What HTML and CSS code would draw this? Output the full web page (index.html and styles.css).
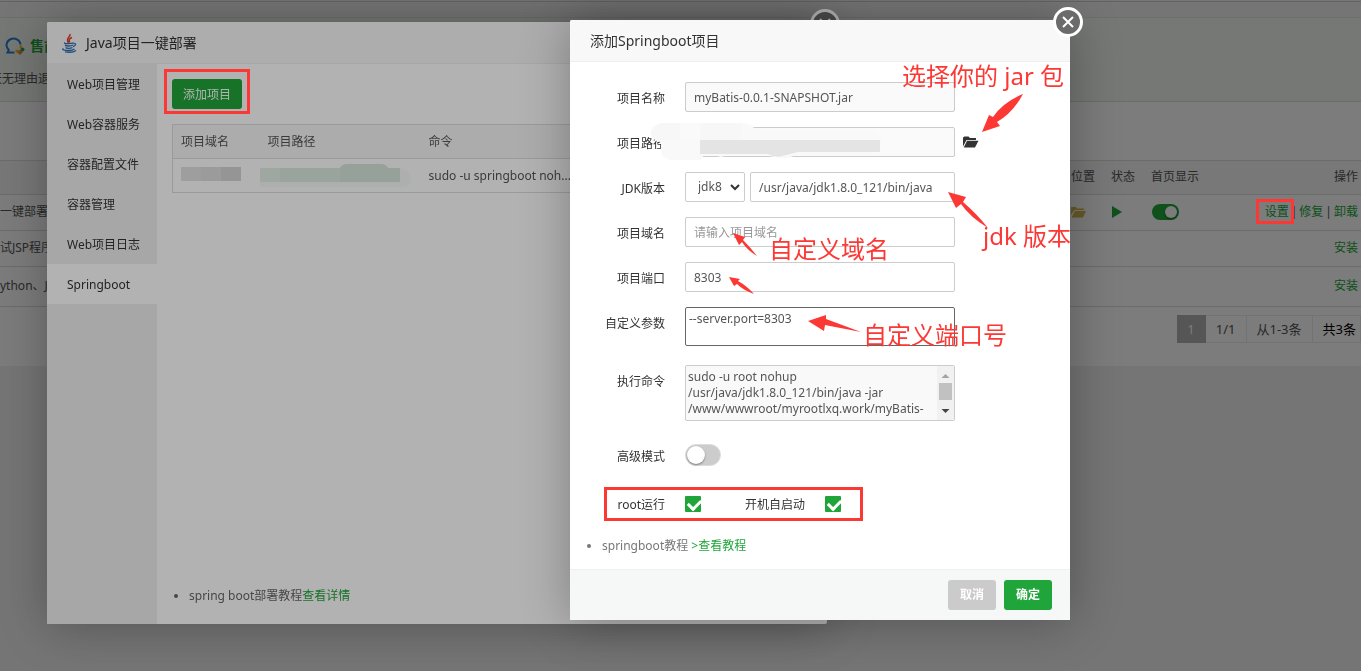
FILE: index.html
```html
<!DOCTYPE html>
<html lang="zh-CN">
<head>
<meta charset="utf-8">
<title>Java项目一键部署</title>
<link rel="stylesheet" href="styles.css">
</head>
<body>
<div class="page">
  <div class="crumb"></div>
  <section class="promo">
    <div class="promo-title">
      <svg width="20" height="18" viewBox="0 0 20 18" fill="none"><path d="M15.500 7.500A7 6.600 0 1 0 3.800 13L2.500 15.500h7" stroke="#2a80d2" stroke-width="2"/><path d="M15 7l2.500 3-3 2z" fill="#e8b92c"/><path d="M10 13.500l6-.5 2 2-3 3z" fill="#e8863c"/><circle cx="17.500" cy="12.500" r="2" fill="#2ca54a"/><circle cx="12" cy="14" r="1.500" fill="#e8b92c"/></svg>
      <strong>售前客服</strong>
    </div>
    <p class="promo-note">天无理由退款</p>
  </section>
  <main class="panel">
    <div class="filters"></div>
    <table class="soft">
      <colgroup><col><col class="w40"><col class="w40"><col class="w110"><col class="w100"></colgroup>
      <thead><tr><th></th><th>位置</th><th>状态</th><th>首页显示</th><th class="end">操作</th></tr></thead>
      <tbody>
        <tr>
          <td>一键部署</td>
          <td><svg class="ico" width="15" height="12" viewBox="0 0 15 12"><path d="M0 1h5l1 1.500h7V4H3.500L0 9z" fill="#d4b94e"/><path d="M4 5h11l-3 6.500H0.500z" fill="#d4b94e"/></svg></td>
          <td><svg class="ico play" width="10" height="12" viewBox="0 0 10 12"><path d="M0 0l10 6-10 6z" fill="#20a53a"/></svg></td>
          <td><input class="switch small" type="checkbox" checked aria-label="首页显示"></td>
          <td class="end"><a href="#">设置</a><span class="sep">|</span><a href="#">修复</a><span class="sep">|</span><a href="#">卸载</a></td>
        </tr>
        <tr><td>试JSP程序</td><td></td><td></td><td></td><td class="end"><a href="#">安装</a></td></tr>
        <tr class="tall"><td>ython、Java</td><td></td><td></td><td></td><td class="end"><a href="#">安装</a></td></tr>
      </tbody>
    </table>
    <nav class="pager"><span class="cur">1</span><span>1/1</span><span>从1-3条</span><span class="total">共3条</span></nav>
  </main>
</div>

<div class="shade"></div>

<section class="dialog deploy" aria-label="Java项目一键部署">
  <button class="close" aria-label="关闭"><svg width="12" height="12" viewBox="0 0 12 12"><path d="M1 1l10 10M11 1L1 11" stroke="#fff" stroke-width="2"/></svg></button>
  <header class="dialog-head">
    <svg class="java" width="16" height="20" viewBox="0 0 16 20" fill="none"><path d="M9 1C10 4 4 5 7.500 10M11 4.500C7 6 8.500 7.500 8.500 9.500" stroke="#e2382c" stroke-width="1.500"/><path d="M4 9.500c-3 1.500 7 1.500 8.500.300M4 12c1 1.300 6 1.300 8 0M4.500 14.500c1 1.200 5 1.200 7 0M12.500 10.500c3.500-.500 2 2.500-.500 3M2.500 15.500c-4 2 8 3 11 .500M4 18.800c4 .700 9 .200 11-1.300" stroke="#2f6fb5" stroke-width="1.300"/></svg>
    <h2>Java项目一键部署</h2>
  </header>
  <div class="deploy-body">
    <nav class="side">
      <a href="#">Web项目管理</a><a href="#">Web容器服务</a><a href="#">容器配置文件</a><a href="#">容器管理</a><a href="#">Web项目日志</a><a href="#" class="on">Springboot</a>
    </nav>
    <div class="deploy-main">
      <button class="btn add">添加项目</button>
      <table class="projects">
        <colgroup><col class="c-name"><col class="c-path"><col></colgroup>
        <thead><tr><th>项目域名</th><th>项目路径</th><th>命令</th></tr></thead>
        <tbody><tr>
          <td><svg class="mask" width="60" height="18" viewBox="0 0 60 18"><path fill="#e2e2e2" d="M0 0h20v14H0z"/><path fill="#dedede" d="M20 0h20v14H20z"/><path fill="#d6d6d6" d="M40 0h20v14H40z"/></svg></td>
          <td><svg class="mask" width="152" height="26" viewBox="0 0 152 26"><path fill="#f8fbf9" d="M0 5h140q11 2 11 14-3 5-10 5H0z"/><path fill="#e4efe7" d="M0 5h20v14H0z"/><path fill="#dcebe0" d="M20 5h120v14H20z"/><path fill="#d7e7db" d="M80 5q2-4 7-4h34q5 0 7 4h12v14H80z"/></svg></td>
          <td>sudo -u springboot noh...</td>
        </tr></tbody>
      </table>
      <ul class="tips"><li>spring boot部署教程<a href="#">查看详情</a></li></ul>
    </div>
  </div>
</section>

<div class="shade"></div>

<form class="dialog create" aria-label="添加Springboot项目">
  <button type="button" class="close" aria-label="关闭"><svg width="12" height="12" viewBox="0 0 12 12"><path d="M1 1l10 10M11 1L1 11" stroke="#fff" stroke-width="2"/></svg></button>
  <header class="dialog-head"><h2>添加Springboot项目</h2></header>
  <div class="fields">
    <div class="field"><label for="name">项目名称</label><input class="text locked" id="name" value="myBatis-0.0.1-SNAPSHOT.jar" readonly></div>
    <div class="field"><label for="path">项目路径</label><input class="text locked" id="path" readonly>
      <button type="button" class="browse" aria-label="选择文件"><svg width="16" height="12" viewBox="0 0 16 12"><path d="M0 1.500V10.500L3.500 4H13V2H7L5.500 0.500H1.500z" fill="#333"/><path d="M4 4.800h11.500L12 11.500H0.800z" fill="#333"/></svg></button>
      <svg class="path-mask" width="240" height="44" viewBox="0 0 240 44"><path d="M12 3H92Q102 4 104 10H220Q236 16 228 26T214 35H146Q140 37 135 38T110 34H80L70 37 54 33 50 40H20Q10 38 10 30V22Q0 20 0 12 2 4 12 3Z" fill="#f9f9f9"/><path d="M12 3H90V20H10V22Q0 20 0 12 2 4 12 3Z" fill="#f7f7f7"/><path d="M29 3h20v17H29z" fill="#fafafa"/><path d="M49 20h180v12H147q-8 2-12 3-10 4-18-1H49z" fill="#e4e4e4"/></svg>
    </div>
    <div class="field"><label for="jdk">JDK版本</label>
      <div class="pair">
        <div class="select"><select id="jdk"><option>jdk8</option></select><svg width="10" height="7" viewBox="0 0 10 7"><path d="M1 1l4 4 4-4" fill="none" stroke="#333" stroke-width="2"/></svg></div>
        <input class="text" value="/usr/java/jdk1.8.0_121/bin/java" aria-label="JDK路径">
      </div>
    </div>
    <div class="field"><label for="domain">项目域名</label><input class="text" id="domain" placeholder="请输入项目域名"></div>
    <div class="field"><label for="port">项目端口</label><input class="text" id="port" value="8303"></div>
    <div class="field area"><label for="args">自定义参数</label><textarea class="args" id="args">--server.port=8303</textarea></div>
    <div class="field area"><label for="cmd">执行命令</label>
      <div class="cmd-box"><textarea class="cmd" id="cmd" readonly>sudo -u root nohup
/usr/java/jdk1.8.0_121/bin/java -jar
/www/wwwroot/myrootlxq.work/myBatis-</textarea>
      <svg class="bar" width="17" height="54" viewBox="0 0 17 54"><path fill="#f1f1f1" d="M0 0h17v54H0z"/><path fill="#a3a3a3" d="M4.500 12l4-4 4 4z"/><path fill="#c1c1c1" d="M2 17h13v17H2z"/><path fill="#444" d="M4.500 43l4 4 4-4z"/></svg></div>
    </div>
    <div class="field"><label for="adv">高级模式</label><input class="switch" type="checkbox" id="adv"></div>
    <div class="field checks"><label for="root">root运行</label><input class="tick" type="checkbox" id="root" checked><label class="boot" for="boot">开机自启动</label><input class="tick" type="checkbox" id="boot" checked></div>
  </div>
  <ul class="tips"><li>springboot教程 <a href="#">&gt;查看教程</a></li></ul>
  <footer class="dialog-foot"><button type="button" class="btn cancel">取消</button><button type="button" class="btn ok">确定</button></footer>
</form>

<div class="notes">
  <i class="frame f-add"></i><i class="frame f-set"></i><i class="frame f-checks"></i>
  <svg width="1100" height="400" viewBox="0 0 1100 400" fill="#fc3835">
    <path d="M1023 94Q1013 113 997 122l3 4-18 6 7-17 4 2q10-15 30-23z"/>
    <path d="M948 192l18 5-3 5q14 12 25 26-18-11-27-24l-5 4z"/>
    <path d="M733 233l12 4-2 3q8 8 14 16-10-6-15-14l-3 3z"/>
    <path d="M729 277l11 2-2 2q9 5 16 13-11-4-17-10l-3 2z"/>
    <path d="M808 321l18-6v4l35 13-36-7-1 6z"/>
  </svg>
  <span class="n-jar">选择你的 jar 包</span>
  <span class="n-jdk">jdk 版本</span>
  <span class="n-domain">自定义域名</span>
  <span class="n-port">自定义端口号</span>
</div>
</body>
</html>
```
FILE: styles.css
```css
* { box-sizing: border-box; }
body {
  margin: 0;
  min-height: 100vh;
  overflow: hidden;
  background: #f1f1f1;
  color: #555;
  font: 12px/18px "Noto Sans", "Noto Sans CJK SC", sans-serif;
}
a { color: #20a53a; text-decoration: none; }
button, input, select, textarea { font: inherit; color: inherit; margin: 0; }
h2 { margin: 0; font-size: 14px; font-weight: 400; color: #333; }
table { width: 100%; border-collapse: collapse; table-layout: fixed; }
th { font-weight: 400; text-align: left; }

/* Page behind the dialogs */
.crumb { height: 18px; border-bottom: 1px solid #dfe5df; background: linear-gradient(#f1f1f1 1px, #ccc 1px, #ccc 2px, #f1f1f1 2px); }
.promo { height: 84px; padding-top: 19px; border-bottom: 1px solid #ddd; background: #f1f6f1; }
.promo-title { display: flex; align-items: center; gap: 5px; padding-left: 5px; font-size: 14px; color: #20a53a; }
.promo-note { margin: 15px 0 0 -10px; }
.panel { height: 264px; background: #fff; }
.filters { height: 59px; border-bottom: 1px solid #ddd; }
.soft th { height: 33px; background: #f6f6f6; }
.soft th, .soft td { padding: 0; border-bottom: 1px solid #ddd; white-space: nowrap; }
.soft td { height: 36px; }
.soft .tall td { height: 40px; }
.soft .end { text-align: right; padding-right: 3px; }
.sep { margin: 0 2px; }
.w40 { width: 40px; }
.w110 { width: 110px; }
.w100 { width: 100px; }
.ico { display: block; }
.play { margin-left: 1px; }
.pager { display: flex; justify-content: flex-end; margin-top: 8px; font-size: 13px; }
.pager span { height: 28px; padding: 0 10px; border: 1px solid #ececec; border-left: 0; line-height: 26px; }
.pager .cur { border-color: #b0b0b0; background: #b0b0b0; color: #fff; }
.pager .total { padding-right: 4px; color: #000; }

.shade { position: fixed; inset: 0; background: rgba(0, 0, 0, .3); }

/* Dialogs */
.dialog { position: absolute; display: flex; flex-direction: column; border-radius: 2px; background: #fff; box-shadow: 1px 1px 50px rgba(0, 0, 0, .3); }
.dialog-head { display: flex; align-items: center; gap: 9px; height: 42px; border-bottom: 1px solid #eee; border-radius: 2px 2px 0 0; background: #f8f8f8; }
.close { position: absolute; top: -13px; right: -13px; display: flex; align-items: center; justify-content: center; width: 30px; height: 30px; padding: 0; border: 3px solid #fff; border-radius: 50%; background: #6b6b6b; }
.btn { height: 30px; padding: 0 10px; border: 0; border-radius: 3px; background: #20a53a; color: #fff; }
.tips { margin: 0; color: #777; }

.deploy { left: 47px; top: 22px; width: 780px; min-height: 602px; }
.deploy .dialog-head { padding-left: 14px; }
.deploy-body { display: flex; flex: 1; }
.side { width: 110px; background: #f0f0f1; }
.side a { display: block; height: 40px; padding-left: 20px; line-height: 42px; color: #333; }
.side .on { background: #fff; }
.add { width: 70px; padding-top: 2px; }
.deploy-main { display: flex; flex: 1; flex-direction: column; align-items: flex-start; padding: 15px; }
.projects { margin-top: 15px; border: 1px solid #ddd; }
.projects th, .projects td { height: 34px; padding: 0 8px; border-bottom: 1px solid #ddd; white-space: nowrap; }
.projects th { background: #f6f6f6; }
.c-name { width: 87px; }
.c-path { width: 161px; }
.mask { display: block; }
.projects td:nth-child(2) { padding-left: 0; }
.deploy .tips { margin-top: auto; padding: 0 0 4px 17px; color: #666; }

.create { left: 570px; top: 20px; width: 500px; min-height: 600px; }
.create .dialog-head { padding-left: 20px; }
.fields { display: flex; flex-direction: column; gap: 15px; padding: 20px 20px 0 0; }
.field { position: relative; display: flex; align-items: center; min-height: 30px; }
.field label { width: 95px; margin-right: 20px; padding-top: 4px; text-align: right; color: #333; }
.text { width: 270px; height: 30px; padding: 0 8px; border: 1px solid #ccc; border-radius: 2px; background: #fff; }
.text::placeholder { color: #999; }
.locked { background: #fafafa; }
.browse { display: flex; margin-left: 8px; padding: 0; border: 0; background: none; }
.path-mask { position: absolute; left: 81px; top: -7px; }
.pair { display: flex; gap: 5px; width: 270px; }
.pair .text { flex: 1; min-width: 0; }
.select { position: relative; width: 60px; }
.select select { width: 100%; height: 30px; padding: 0 12px; border: 1px solid #ccc; border-radius: 2px; background: #fff; appearance: none; }
.select svg { position: absolute; right: 5px; top: 12px; pointer-events: none; }
.area { align-items: flex-start; padding-bottom: 4px; }
.area label { padding-top: 8px; }
textarea { display: block; width: 270px; padding: 3px; border: 1px solid #ccc; border-radius: 2px; line-height: 16px; overflow: hidden; resize: none; }
.args { height: 39px; border-color: #666; }
.cmd { height: 56px; padding: 3px 2px; background: #f9f9f9; white-space: pre; }
.cmd-box { position: relative; }
.bar { position: absolute; right: 1px; top: 1px; }
.switch { position: relative; width: 36px; height: 22px; border: 1px solid #ddd; border-radius: 11px; background: #ccc; appearance: none; }
.switch::after { content: ""; position: absolute; left: 1px; top: 1px; width: 18px; height: 18px; border-radius: 50%; background: #fff; box-shadow: 0 1px 2px rgba(0, 0, 0, .4); }
.small { display: block; width: 27px; height: 16px; margin-left: 1px; border: 0; background: #20a53a; }
.small::after { left: 13px; top: 2px; width: 12px; height: 12px; }
.checks { height: 38px; }
.checks label { padding-top: 1px; }
.tick { width: 16px; height: 16px; border-radius: 1px; background: #20a53a; appearance: none; }
.tick::after { content: ""; display: block; width: 10px; height: 6px; margin: 3px 0 0 3px; border: solid #fff; border-width: 0 0 3px 3px; transform: rotate(-45deg); }
.field .boot { width: 104px; }
.create > .tips { margin-top: 14px; padding-left: 32px; }
.dialog-foot { display: flex; justify-content: flex-end; gap: 8px; margin-top: auto; padding: 10px 18px; border-top: 1px solid #edf1f2; background: #f6f8f8; }
.dialog-foot .btn { width: 48px; font-weight: 700; }
.dialog-foot .cancel { background: #cbcbcb; }

/* Hand-drawn notes over the dialogs */
.notes { position: absolute; inset: 0; pointer-events: none; color: #fc3835; font-size: 24px; line-height: 32px; white-space: nowrap; }
.notes svg { position: absolute; left: 0; top: 0; }
.notes span { position: absolute; }
.frame { position: absolute; border: 3px solid #fc3835; }
.f-add { left: 164px; top: 69px; width: 86px; height: 45px; }
.f-set { right: 67px; top: 199px; width: 38px; height: 25px; }
.f-checks { left: 604px; top: 487px; width: 259px; height: 34px; }
.n-jar { left: 902px; top: 60px; }
.n-jdk { left: 983px; top: 220px; }
.n-domain { left: 769px; top: 233px; }
.n-port { left: 863px; top: 319px; }
```
